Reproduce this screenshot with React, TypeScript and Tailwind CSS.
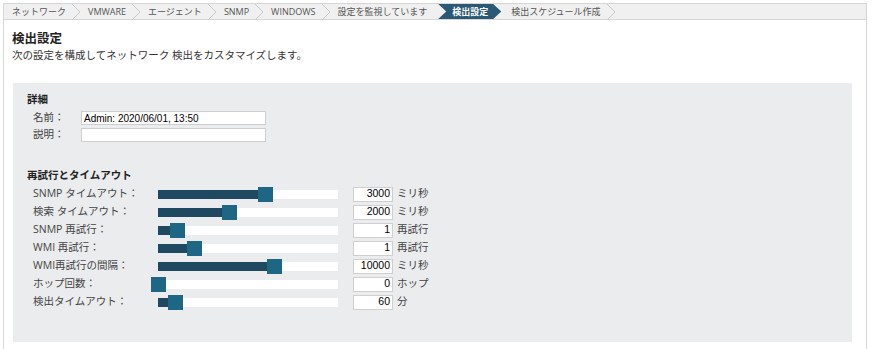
const crumbs = [
  "ネットワーク",
  "VMWARE",
  "エージェント",
  "SNMP",
  "WINDOWS",
  "設定を監視しています",
  "検出設定",
  "検出スケジュール作成",
];
const activeIndex = 6;

const sliders = [
  { label: "SNMP タイムアウト：", frac: 0.597, value: "3000", unit: "ミリ秒" },
  { label: "検索 タイムアウト：", frac: 0.392, value: "2000", unit: "ミリ秒" },
  { label: "SNMP 再試行：", frac: 0.103, value: "1", unit: "再試行" },
  { label: "WMI 再試行：", frac: 0.2, value: "1", unit: "再試行" },
  { label: "WMI再試行の間隔：", frac: 0.647, value: "10000", unit: "ミリ秒" },
  { label: "ホップ回数：", frac: 0, value: "0", unit: "ホップ" },
  { label: "検出タイムアウト：", frac: 0.092, value: "60", unit: "分" },
];

const font = "font-['Open_Sans','Noto_Sans_CJK_JP',sans-serif]";

function Chevron() {
  return (
    <svg width="10" height="16" viewBox="0 0 10 16" className="shrink-0">
      <polyline points="1,0 9,8 1,16" fill="none" stroke="#c9c9c9" strokeWidth="1" />
    </svg>
  );
}

function Slider({ frac }: { frac: number }) {
  const pos = frac * 180;
  return (
    <div className="relative w-[180px] h-[9px] bg-white">
      <div className="h-full bg-[#1f4861]" style={{ width: pos }} />
      <div className="absolute top-[-3px] w-[15px] h-[15px] bg-[#1d6784]" style={{ left: pos - 7 }} />
    </div>
  );
}

export default function App() {
  return (
    <div className={`w-[872px] h-[349px] bg-white pt-[3px] pl-[3px] ${font}`}>
      <div className="w-[864px] h-[346px] border-l border-r border-t border-[#d6d6d6]">
        <div className="h-[16px] bg-[#f0f0f0] border-b border-[#d6d6d6] flex items-center pl-[8px] text-[9px] text-[#555] leading-none">
          {crumbs.map((c, i) => {
            if (i === activeIndex) {
              return (
                <div
                  key={c}
                  className="h-[15px] w-[63px] -ml-[1px] mr-[10px] bg-[#2b5874] text-white font-bold flex items-center pl-[14px] [clip-path:polygon(0_0,55px_0,63px_50%,55px_100%,0_100%,8px_50%)]"
                >
                  {c}
                </div>
              );
            }
            const showChevron = i + 1 !== activeIndex;
            return (
              <div key={c} className="flex items-center">
                <span className="whitespace-nowrap">{c}</span>
                {showChevron && (
                  <div className="ml-[5px] mr-[7px] flex">
                    <Chevron />
                  </div>
                )}
                {!showChevron && <div className="w-[12px]" />}
              </div>
            );
          })}
        </div>

        <div className="pl-[8px] mt-[11px] h-[16px] flex items-center text-[12.5px] font-bold text-[#222]">検出設定</div>
        <div className="pl-[8px] mt-[2px] h-[14px] flex items-center text-[10.5px] text-[#333]">
          次の設定を構成してネットワーク 検出をカスタマイズします。
        </div>

        <div className="ml-[9px] mt-[20px] w-[839px] h-[259px] bg-[#ebecee] pt-[10px] pl-[14px]">
          <div className="h-[14px] flex items-center text-[10.5px] font-bold text-[#222]">詳細</div>
          <div className="mt-[4px] flex flex-col gap-[3px] pl-[6px]">
            {[
              { label: "名前：", value: "Admin: 2020/06/01, 13:50" },
              { label: "説明：", value: "" },
            ].map((r) => (
              <div key={r.label} className="flex items-center h-[14px]">
                <span className="w-[48px] text-[10.5px] text-[#444]">{r.label}</span>
                <div className="w-[185px] h-[14px] bg-white border border-[#cfcfcf] pl-[2px] flex items-center text-[10px] text-black font-['Liberation_Sans',Arial,sans-serif]">
                  {r.value}
                </div>
              </div>
            ))}
          </div>

          <div className="mt-[27px] h-[14px] flex items-center text-[10.5px] font-bold text-[#222]">再試行とタイムアウト</div>
          <div className="mt-[2px] pl-[6px] flex flex-col">
            {sliders.map((s) => (
              <div key={s.label} className="h-[18px] flex items-center">
                <span className="w-[125px] text-[10.5px] text-[#444] whitespace-nowrap">{s.label}</span>
                <Slider frac={s.frac} />
                <div className="ml-[15px] w-[40px] h-[15px] bg-white border border-[#cfcfcf] pr-[2px] flex items-center justify-end text-[10.5px] text-black font-['Liberation_Sans',Arial,sans-serif]">
                  {s.value}
                </div>
                <span className="ml-[4px] text-[10.5px] text-[#444]">{s.unit}</span>
              </div>
            ))}
          </div>
        </div>
      </div>
    </div>
  );
}
